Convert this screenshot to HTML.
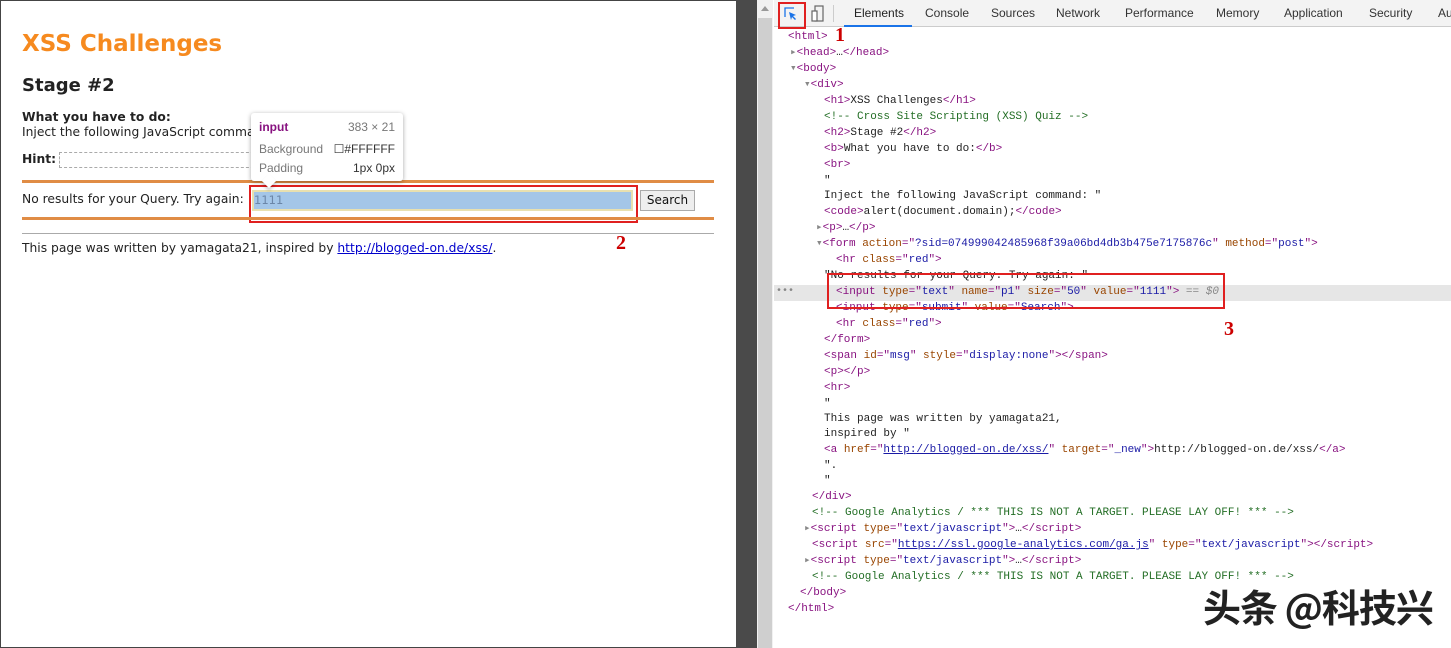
<!DOCTYPE html>
<html><head><meta charset="utf-8"><style>
*{margin:0;padding:0;box-sizing:border-box}
body{width:1451px;height:648px;position:relative;overflow:hidden;background:#fff;font-family:"DejaVu Sans","Liberation Sans",sans-serif}
.a{position:absolute;white-space:nowrap}
.lp{position:absolute;left:0;top:0;width:736px;height:648px;background:#fff;border:1px solid #444;border-right:none}
.t{font-size:12.3px;color:#222}
.dt{position:absolute;left:774px;top:0;width:677px;height:648px;background:#fff}
.m{font-family:"Liberation Mono","DejaVu Sans Mono",monospace;font-size:11px;color:#222;position:absolute;white-space:nowrap;line-height:16px}
.tg{color:#881280}.at{color:#994500}.av{color:#1a1aa6}.cm{color:#236e25}.gy{color:#888}
.tab{position:absolute;top:6px;font-size:12px;color:#333;font-family:"Liberation Sans",sans-serif}
</style></head><body>
<div class="lp"></div>
<div class="a" style="left:22px;top:31px;font-size:23px;font-weight:bold;color:#f68a1f">XSS Challenges</div>
<div class="a" style="left:22px;top:75px;font-size:18px;font-weight:bold;color:#222">Stage #2</div>
<div class="a t" style="left:22px;top:110px;font-weight:bold">What you have to do:</div>
<div class="a t" style="left:22px;top:125px">Inject the following JavaScript comma<span style="color:#44a;margin-left:120px">);</span></div>
<div class="a t" style="left:22px;top:152px;font-weight:bold">Hint:</div>
<div class="a" style="left:59px;top:152px;width:200px;height:16px;border:1px dashed #aaa"></div>
<div class="a" style="left:22px;top:180px;width:692px;height:3px;background:#e08c45"></div>
<div class="a t" style="left:22px;top:192px">No results for your Query. Try again:</div>
<div class="a" style="left:252px;top:190px;width:381px;height:21px;background:#a4c6e8;border:2px solid #e8e0b0"></div>
<div class="a" style="left:254px;top:193px;font-size:11.5px;color:#6b86a8">1111</div>
<div class="a" style="left:640px;top:190px;width:55px;height:21px;background:#eee;border:1px solid #aaa;font-size:12px;text-align:center;line-height:19px;color:#111">Search</div>
<div class="a" style="left:249px;top:185px;width:389px;height:38px;border:2px solid #e02020"></div>
<div class="a" style="left:22px;top:217px;width:692px;height:3px;background:#e08c45"></div>
<div class="a" style="left:22px;top:233px;width:692px;height:1px;background:#aaa"></div>
<div class="a t" style="left:22px;top:241px">This page was written by yamagata21, inspired by <span style="color:#00c;text-decoration:underline">http://blogged-on.de/xss/</span>.</div>
<div class="a" style="left:616px;top:232px;font-family:'Liberation Serif',serif;font-size:20px;font-weight:bold;color:#c00">2</div>
<div class="a" style="left:251px;top:113px;width:152px;height:68px;background:#fff;border-radius:3px;box-shadow:0 1px 5px rgba(0,0,0,.35);font-family:'Liberation Sans',sans-serif;font-size:12px;color:#777">
<div class="a" style="left:8px;top:7px;color:#881280;font-weight:bold">input</div>
<div class="a" style="right:8px;top:7px">383 × 21</div>
<div class="a" style="left:8px;top:29px">Background</div>
<div class="a" style="right:8px;top:29px;color:#333">☐#FFFFFF</div>
<div class="a" style="left:8px;top:48px">Padding</div>
<div class="a" style="right:8px;top:48px;color:#333">1px 0px</div>
</div>
<div class="a" style="left:264px;top:176px;width:10px;height:10px;background:#fff;transform:rotate(45deg);box-shadow:2px 2px 3px rgba(0,0,0,.2)"></div>

<div class="a" style="left:736px;top:0;width:21px;height:648px;background:#4a4a4a"></div>
<div class="a" style="left:757px;top:0;width:16px;height:648px;background:#f1f1f1"></div>
<div class="a" style="left:758px;top:18px;width:14px;height:630px;background:#cfcfcf"></div>
<div class="a" style="left:761px;top:6px;width:0;height:0;border-left:4px solid transparent;border-right:4px solid transparent;border-bottom:5px solid #999"></div>

<div class="dt">
<div class="a" style="left:0;top:0;width:677px;height:27px;background:#f3f3f3;border-bottom:1px solid #ccc"></div>
<div class="a" style="left:4px;top:2px;width:28px;height:27px;border:2px solid #e02020"></div>
<svg class="a" style="left:9px;top:6px" width="16" height="16" viewBox="0 0 16 16"><path d="M2 11V2h9" fill="none" stroke="#1a73e8" stroke-width="1.3"/><path d="M6 6l7 3-3 1 3 3-1 1-3-3-1 3z" fill="#1a73e8"/></svg>
<svg class="a" style="left:37px;top:5px" width="14" height="18" viewBox="0 0 14 18"><rect x="4" y="1" width="8" height="15" fill="none" stroke="#666" stroke-width="1.2"/><rect x="1" y="6" width="5" height="10" fill="#fff" stroke="#666" stroke-width="1.2"/></svg>
<div class="a" style="left:59px;top:5px;width:1px;height:17px;background:#ccc"></div>
<div class="tab" style="left:80px;color:#222">Elements</div>
<div class="a" style="left:70px;top:25px;width:68px;height:2px;background:#1a73e8"></div>
<div class="tab" style="left:151px">Console</div>
<div class="tab" style="left:217px">Sources</div>
<div class="tab" style="left:282px">Network</div>
<div class="tab" style="left:351px">Performance</div>
<div class="tab" style="left:442px">Memory</div>
<div class="tab" style="left:510px">Application</div>
<div class="tab" style="left:595px">Security</div>
<div class="tab" style="left:664px">Au</div>
<div class="a" style="left:61px;top:24px;font-family:'Liberation Serif',serif;font-size:20px;font-weight:bold;color:#c00">1</div>
<div class="a" style="left:0;top:285px;width:677px;height:16px;background:#e6e6e6"></div>
<div class="m gy" style="left:2px;top:284px;font-size:10px">•••</div>
<div class="m" style="left:14px;top:29px"><span class="tg">&lt;html&gt;</span></div>
<div class="m" style="left:16px;top:45px"><span class="gy">▸</span><span class="tg">&lt;head&gt;</span>…<span class="tg">&lt;/head&gt;</span></div>
<div class="m" style="left:16px;top:61px"><span class="gy">▾</span><span class="tg">&lt;body&gt;</span></div>
<div class="m" style="left:30px;top:77px"><span class="gy">▾</span><span class="tg">&lt;div&gt;</span></div>
<div class="m" style="left:50px;top:93px"><span class="tg">&lt;h1&gt;</span>XSS Challenges<span class="tg">&lt;/h1&gt;</span></div>
<div class="m cm" style="left:50px;top:109px">&lt;!-- Cross Site Scripting (XSS) Quiz --&gt;</div>
<div class="m" style="left:50px;top:125px"><span class="tg">&lt;h2&gt;</span>Stage #2<span class="tg">&lt;/h2&gt;</span></div>
<div class="m" style="left:50px;top:141px"><span class="tg">&lt;b&gt;</span>What you have to do:<span class="tg">&lt;/b&gt;</span></div>
<div class="m" style="left:50px;top:157px"><span class="tg">&lt;br&gt;</span></div>
<div class="m" style="left:50px;top:173px">"</div>
<div class="m" style="left:50px;top:188px">Inject the following JavaScript command: "</div>
<div class="m" style="left:50px;top:204px"><span class="tg">&lt;code&gt;</span>alert(document.domain);<span class="tg">&lt;/code&gt;</span></div>
<div class="m" style="left:42px;top:220px"><span class="gy">▸</span><span class="tg">&lt;p&gt;</span>…<span class="tg">&lt;/p&gt;</span></div>
<div class="m" style="left:42px;top:236px"><span class="gy">▾</span><span class="tg">&lt;form </span><span class="at">action</span><span class="tg">="</span><span class="av">?sid=074999042485968f39a06bd4db3b475e7175876c</span><span class="tg">" </span><span class="at">method</span><span class="tg">="</span><span class="av">post</span><span class="tg">"&gt;</span></div>
<div class="m" style="left:62px;top:252px"><span class="tg">&lt;hr </span><span class="at">class</span><span class="tg">="</span><span class="av">red</span><span class="tg">"&gt;</span></div>
<div class="m" style="left:50px;top:268px">"No results for your Query. Try again: "</div>
<div class="m" style="left:62px;top:284px"><span class="tg">&lt;input </span><span class="at">type</span><span class="tg">="</span><span class="av">text</span><span class="tg">" </span><span class="at">name</span><span class="tg">="</span><span class="av">p1</span><span class="tg">" </span><span class="at">size</span><span class="tg">="</span><span class="av">50</span><span class="tg">" </span><span class="at">value</span><span class="tg">="</span><span class="av">1111</span><span class="tg">"&gt;</span> <span class="gy">== <i>$0</i></span></div>
<div class="m" style="left:62px;top:300px"><span class="tg">&lt;input </span><span class="at">type</span><span class="tg">="</span><span class="av">submit</span><span class="tg">" </span><span class="at">value</span><span class="tg">="</span><span class="av">Search</span><span class="tg">"&gt;</span></div>
<div class="a" style="left:53px;top:273px;width:398px;height:36px;border:2px solid #e02020"></div>
<div class="m" style="left:62px;top:316px"><span class="tg">&lt;hr </span><span class="at">class</span><span class="tg">="</span><span class="av">red</span><span class="tg">"&gt;</span></div>
<div class="a" style="left:450px;top:318px;font-family:'Liberation Serif',serif;font-size:20px;font-weight:bold;color:#c00">3</div>
<div class="m" style="left:50px;top:332px"><span class="tg">&lt;/form&gt;</span></div>
<div class="m" style="left:50px;top:348px"><span class="tg">&lt;span </span><span class="at">id</span><span class="tg">="</span><span class="av">msg</span><span class="tg">" </span><span class="at">style</span><span class="tg">="</span><span class="av">display:none</span><span class="tg">"&gt;&lt;/span&gt;</span></div>
<div class="m" style="left:50px;top:364px"><span class="tg">&lt;p&gt;&lt;/p&gt;</span></div>
<div class="m" style="left:50px;top:380px"><span class="tg">&lt;hr&gt;</span></div>
<div class="m" style="left:50px;top:396px">"</div>
<div class="m" style="left:50px;top:411px">This page was written by yamagata21,</div>
<div class="m" style="left:50px;top:426px">inspired by "</div>
<div class="m" style="left:50px;top:442px"><span class="tg">&lt;a </span><span class="at">href</span><span class="tg">="</span><span style="color:#1a1aa6;text-decoration:underline">http://blogged-on.de/xss/</span><span class="tg">" </span><span class="at">target</span><span class="tg">="</span><span class="av">_new</span><span class="tg">"&gt;</span>http://blogged-on.de/xss/<span class="tg">&lt;/a&gt;</span></div>
<div class="m" style="left:50px;top:458px">".</div>
<div class="m" style="left:50px;top:473px">"</div>
<div class="m" style="left:38px;top:489px"><span class="tg">&lt;/div&gt;</span></div>
<div class="m cm" style="left:38px;top:505px">&lt;!-- Google Analytics / *** THIS IS NOT A TARGET. PLEASE LAY OFF! *** --&gt;</div>
<div class="m" style="left:30px;top:521px"><span class="gy">▸</span><span class="tg">&lt;script </span><span class="at">type</span><span class="tg">="</span><span class="av">text/javascript</span><span class="tg">"&gt;</span>…<span class="tg">&lt;/script&gt;</span></div>
<div class="m" style="left:38px;top:537px"><span class="tg">&lt;script </span><span class="at">src</span><span class="tg">="</span><span style="color:#1a1aa6;text-decoration:underline">https://ssl.google-analytics.com/ga.js</span><span class="tg">" </span><span class="at">type</span><span class="tg">="</span><span class="av">text/javascript</span><span class="tg">"&gt;&lt;/script&gt;</span></div>
<div class="m" style="left:30px;top:553px"><span class="gy">▸</span><span class="tg">&lt;script </span><span class="at">type</span><span class="tg">="</span><span class="av">text/javascript</span><span class="tg">"&gt;</span>…<span class="tg">&lt;/script&gt;</span></div>
<div class="m cm" style="left:38px;top:569px">&lt;!-- Google Analytics / *** THIS IS NOT A TARGET. PLEASE LAY OFF! *** --&gt;</div>
<div class="m" style="left:26px;top:585px"><span class="tg">&lt;/body&gt;</span></div>
<div class="m" style="left:14px;top:601px"><span class="tg">&lt;/html&gt;</span></div>
<div class="a" style="left:429px;top:580px;font-family:'Noto Sans CJK SC',sans-serif;font-size:38px;font-weight:bold;color:#222;letter-spacing:-1px;line-height:52px">头条 @科技兴</div>
</div>
</body></html>
